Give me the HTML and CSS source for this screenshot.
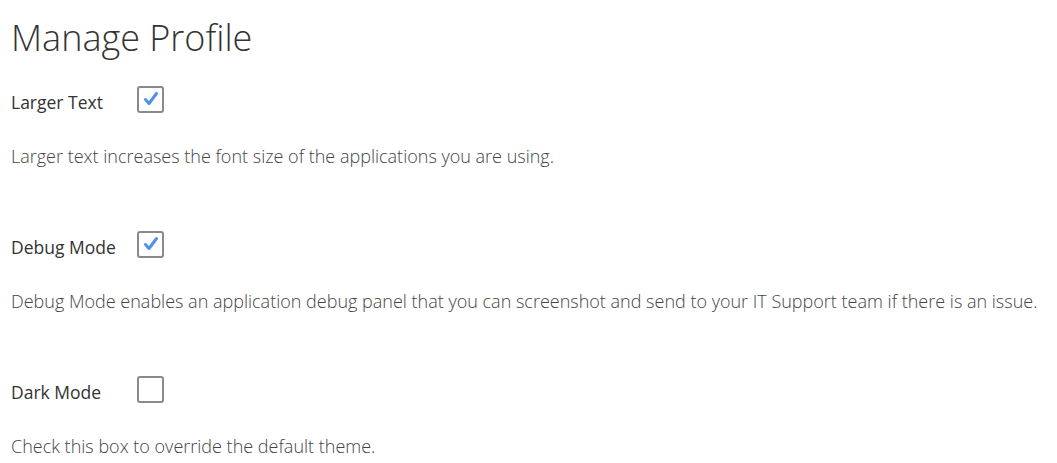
FILE: index.html
```html
<!DOCTYPE html>
<html>
<head>
  <title>Manage Profile</title>
  <link rel="stylesheet" href="styles.css">
</head>
<body>
  <div class="profile">
    <h1>Manage Profile</h1>

    <div class="setting">
      <label class="row">
        <span class="label">Larger Text</span>
        <span class="box">
          <svg viewBox="0 0 16 16" width="16" height="16"><path d="M2.5 8.5l3.5 4L13.5 2.5" fill="none" stroke="#4f92ee" stroke-width="3" stroke-linecap="round" stroke-linejoin="round"/></svg>
        </span>
      </label>
      <p class="desc">Larger text increases the font size of the applications you are using.</p>
    </div>

    <div class="setting">
      <label class="row">
        <span class="label">Debug Mode</span>
        <span class="box">
          <svg viewBox="0 0 16 16" width="16" height="16"><path d="M2.5 8.5l3.5 4L13.5 2.5" fill="none" stroke="#4f92ee" stroke-width="3" stroke-linecap="round" stroke-linejoin="round"/></svg>
        </span>
      </label>
      <p class="desc">Debug Mode enables an application debug panel that you can screenshot and send to your IT Support team if there is an issue.</p>
    </div>

    <div class="setting">
      <label class="row">
        <span class="label">Dark Mode</span>
        <span class="box"></span>
      </label>
      <p class="desc">Check this box to override the default theme.</p>
    </div>
  </div>
</body>
</html>
```

FILE: styles.css
```css
body { margin: 0; background: #fff; font-family: "Open Sans", "Liberation Sans", sans-serif; color: #333; }
.profile { padding: 14px 11px; }
h1 { font-size: 36px; font-weight: 300; margin: 0 0 23px; line-height: 48px; color: #333; }
.setting { margin-bottom: 62px; }
.row { display: flex; align-items: center; height: 28px; }
.label { width: 126px; font-size: 17.5px; color: #333; margin-top: 5px; }
.box { width: 23px; height: 23px; border: 2px solid #8a8a8a; border-radius: 3px; display: flex; align-items: center; justify-content: center; }
.desc { margin: 31px 0 0; font-size: 18px; font-weight: 300; color: #444; line-height: 24px; }
```
